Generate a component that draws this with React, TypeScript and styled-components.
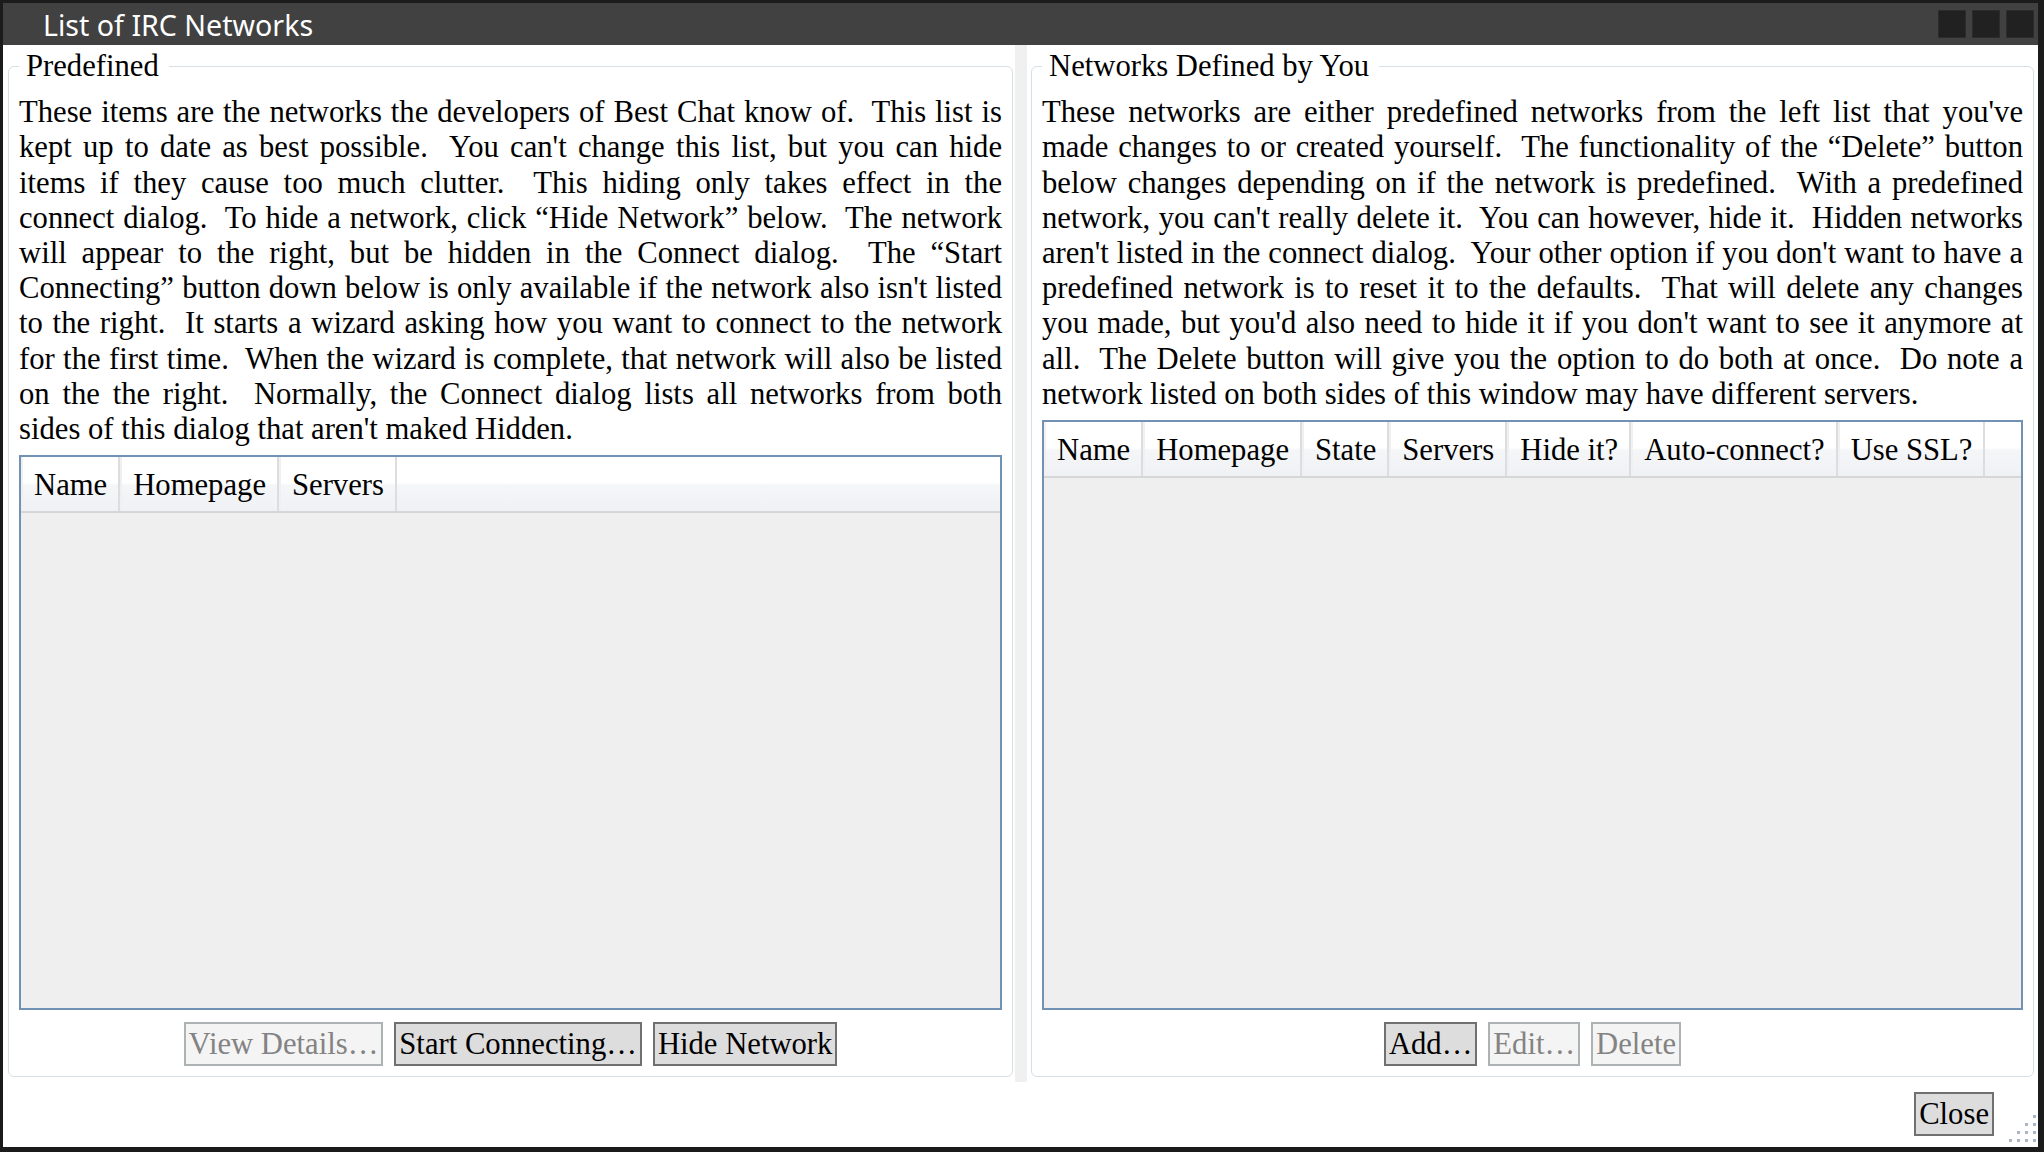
import React from 'react';
import styled, { createGlobalStyle } from 'styled-components';

const SERIF = `"Liberation Serif", "Times New Roman", serif`;
const SANS = `"Segoe UI", "Noto Sans", "Open Sans", sans-serif`;

const GlobalStyle = createGlobalStyle`
  html, body { margin: 0; padding: 0; background: #1b1b1b; }
  body { overflow: hidden; }
  *, *::before, *::after { box-sizing: border-box; }
`;

const Window = styled.div`
  width: 2044px;
  height: 1152px;
  display: grid;
  grid-template-rows: 42px 1fr 65px;
  background: #ffffff;
  border-style: solid;
  border-color: #1b1b1b;
  border-width: 3px 6px 5px 3px;
  font-family: ${SERIF};
  font-size: 30.67px;
  line-height: 35.2px;
  color: #000;
`;

const TitleBar = styled.div`
  display: flex;
  align-items: center;
  background: #414141;
  padding: 0 4px 0 40px;
`;

const TitleText = styled.div`
  flex: 1;
  font-family: ${SANS};
  font-size: 28.6px;
  line-height: 34px;
  color: #ffffff;
  padding-top: 2px;
`;

const CaptionButtons = styled.div`
  display: flex;
  gap: 6px;
`;

const CaptionButton = styled.div`
  width: 28px;
  height: 28px;
  background: #212121;
  border: 1px solid #2c2c2c;
`;

const Content = styled.div`
  display: grid;
  grid-template-columns: 1007px 12px 1fr;
  padding: 0 4px 0 5px;
  min-height: 0;
`;

const Splitter = styled.div`
  background: #f0f0f0;
`;

const GroupBox = styled.fieldset<{ $side: 'left' | 'right' }>`
  margin: ${(p) => (p.$side === 'left' ? '4px 2px 5px 0' : '4px 0 5px 4px')};
  border: 1px solid #d5dfe6;
  border-radius: 6px;
  padding: 11px 10px 10px;
  min-width: 0;
  min-height: 0;
  display: flex;
  flex-direction: column;
`;

const Legend = styled.legend`
  padding: 0 10px 0 7px;
  margin-left: 0;
  line-height: 35.2px;
`;

const Description = styled.p`
  margin: 0;
  text-align: justify;
  white-space: pre-wrap;
`;

const ListView = styled.div`
  margin-top: 8px;
  flex: 1;
  min-height: 0;
  display: flex;
  flex-direction: column;
  border: 2px solid #7191b5;
  background: #efefef;
`;

const HeaderRow = styled.div`
  display: flex;
  border-bottom: 2px solid #d6d6d6;
  background: linear-gradient(
    to bottom,
    #ffffff 0%,
    #ffffff 48%,
    #f5f6f8 52%,
    #f0f1f4 100%
  );
`;

const HeaderCell = styled.div`
  padding: 11px 11px 8px;
  border-left: 2px solid #f0f0f0;
  border-right: 2px solid #dcdddf;
  white-space: nowrap;
`;

const HeaderFiller = styled.div`
  flex: 1;
`;

const ListBody = styled.div`
  flex: 1;
`;

const ButtonRow = styled.div`
  display: flex;
  justify-content: center;
  gap: 11px;
  margin-top: 12px;
`;

const Button = styled.button`
  font-family: ${SERIF};
  font-size: 30.67px;
  line-height: 36px;
  padding: 2px 3px;
  margin: 0;
  color: #000;
  background: #dddddd;
  border: 2px solid #707070;
  border-radius: 0;
  cursor: default;

  &:disabled {
    color: #838383;
    background: #f4f4f4;
    border-color: #adb2b5;
  }
`;

const BottomBar = styled.div`
  display: flex;
  justify-content: flex-end;
  align-items: flex-start;
  padding-top: 10px;
`;

const Grip = styled.svg`
  align-self: flex-end;
  margin-left: 14px;
  flex: none;
`;

const leftText =
  "These items are the networks the developers of Best Chat know of.  This list is kept up to date as best possible.  You can't change this list, but you can hide items if they cause too much clutter.  This hiding only takes effect in the connect dialog.  To hide a network, click \u201CHide Network\u201D below.  The network will appear to the right, but be hidden in the Connect dialog.  The \u201CStart Connecting\u201D button down below is only available if the network also isn't listed to the right.  It starts a wizard asking how you want to connect to the network for the first time.  When the wizard is complete, that network will also be listed on the the right.  Normally, the Connect dialog lists all networks from both sides of this dialog that aren't maked Hidden.";

const rightText =
  "These networks are either predefined networks from the left list that you've made changes to or created yourself.  The functionality of the \u201CDelete\u201D button below changes depending on if the network is predefined.  With a predefined network, you can't really delete it.  You can however, hide it.  Hidden networks aren't listed in the connect dialog.  Your other option if you don't want to have a predefined network is to reset it to the defaults.  That will delete any changes you made, but you'd also need to hide it if you don't want to see it anymore at all.  The Delete button will give you the option to do both at once.  Do note a network listed on both sides of this window may have different servers.";

type Btn = { label: string; disabled?: boolean };

const Panel: React.FC<{
  side: 'left' | 'right';
  title: string;
  text: string;
  columns: string[];
  buttons: Btn[];
}> = ({ side, title, text, columns, buttons }) => (
  <GroupBox $side={side}>
    <Legend>{title}</Legend>
    <Description>{text}</Description>
    <ListView>
      <HeaderRow>
        {columns.map((c) => (
          <HeaderCell key={c}>{c}</HeaderCell>
        ))}
        <HeaderFiller />
      </HeaderRow>
      <ListBody />
    </ListView>
    <ButtonRow>
      {buttons.map((b) => (
        <Button key={b.label} disabled={b.disabled}>
          {b.label}
        </Button>
      ))}
    </ButtonRow>
  </GroupBox>
);

const gripDots: [number, number][] = [];
for (let r = 0; r < 4; r++) {
  for (let c = 3 - r; c < 4; c++) {
    gripDots.push([1 + c * 8, 4 + r * 8]);
  }
}

export default function App() {
  return (
    <>
      <GlobalStyle />
      <Window>
        <TitleBar>
          <TitleText>List of IRC Networks</TitleText>
          <CaptionButtons>
            <CaptionButton />
            <CaptionButton />
            <CaptionButton />
          </CaptionButtons>
        </TitleBar>
        <Content>
          <Panel
            side="left"
            title="Predefined"
            text={leftText}
            columns={['Name', 'Homepage', 'Servers']}
            buttons={[
              { label: 'View Details\u2026', disabled: true },
              { label: 'Start Connecting\u2026' },
              { label: 'Hide Network' },
            ]}
          />
          <Splitter />
          <Panel
            side="right"
            title="Networks Defined by You"
            text={rightText}
            columns={['Name', 'Homepage', 'State', 'Servers', 'Hide it?', 'Auto-connect?', 'Use SSL?']}
            buttons={[
              { label: 'Add\u2026' },
              { label: 'Edit\u2026', disabled: true },
              { label: 'Delete', disabled: true },
            ]}
          />
        </Content>
        <BottomBar>
          <Button>Close</Button>
          <Grip width="30" height="36" viewBox="0 0 30 36">
            {gripDots.map(([x, y]) => (
              <rect key={`${x}-${y}`} x={x} y={y} width="3" height="3" fill="#aab6c2" />
            ))}
          </Grip>
        </BottomBar>
      </Window>
    </>
  );
}
